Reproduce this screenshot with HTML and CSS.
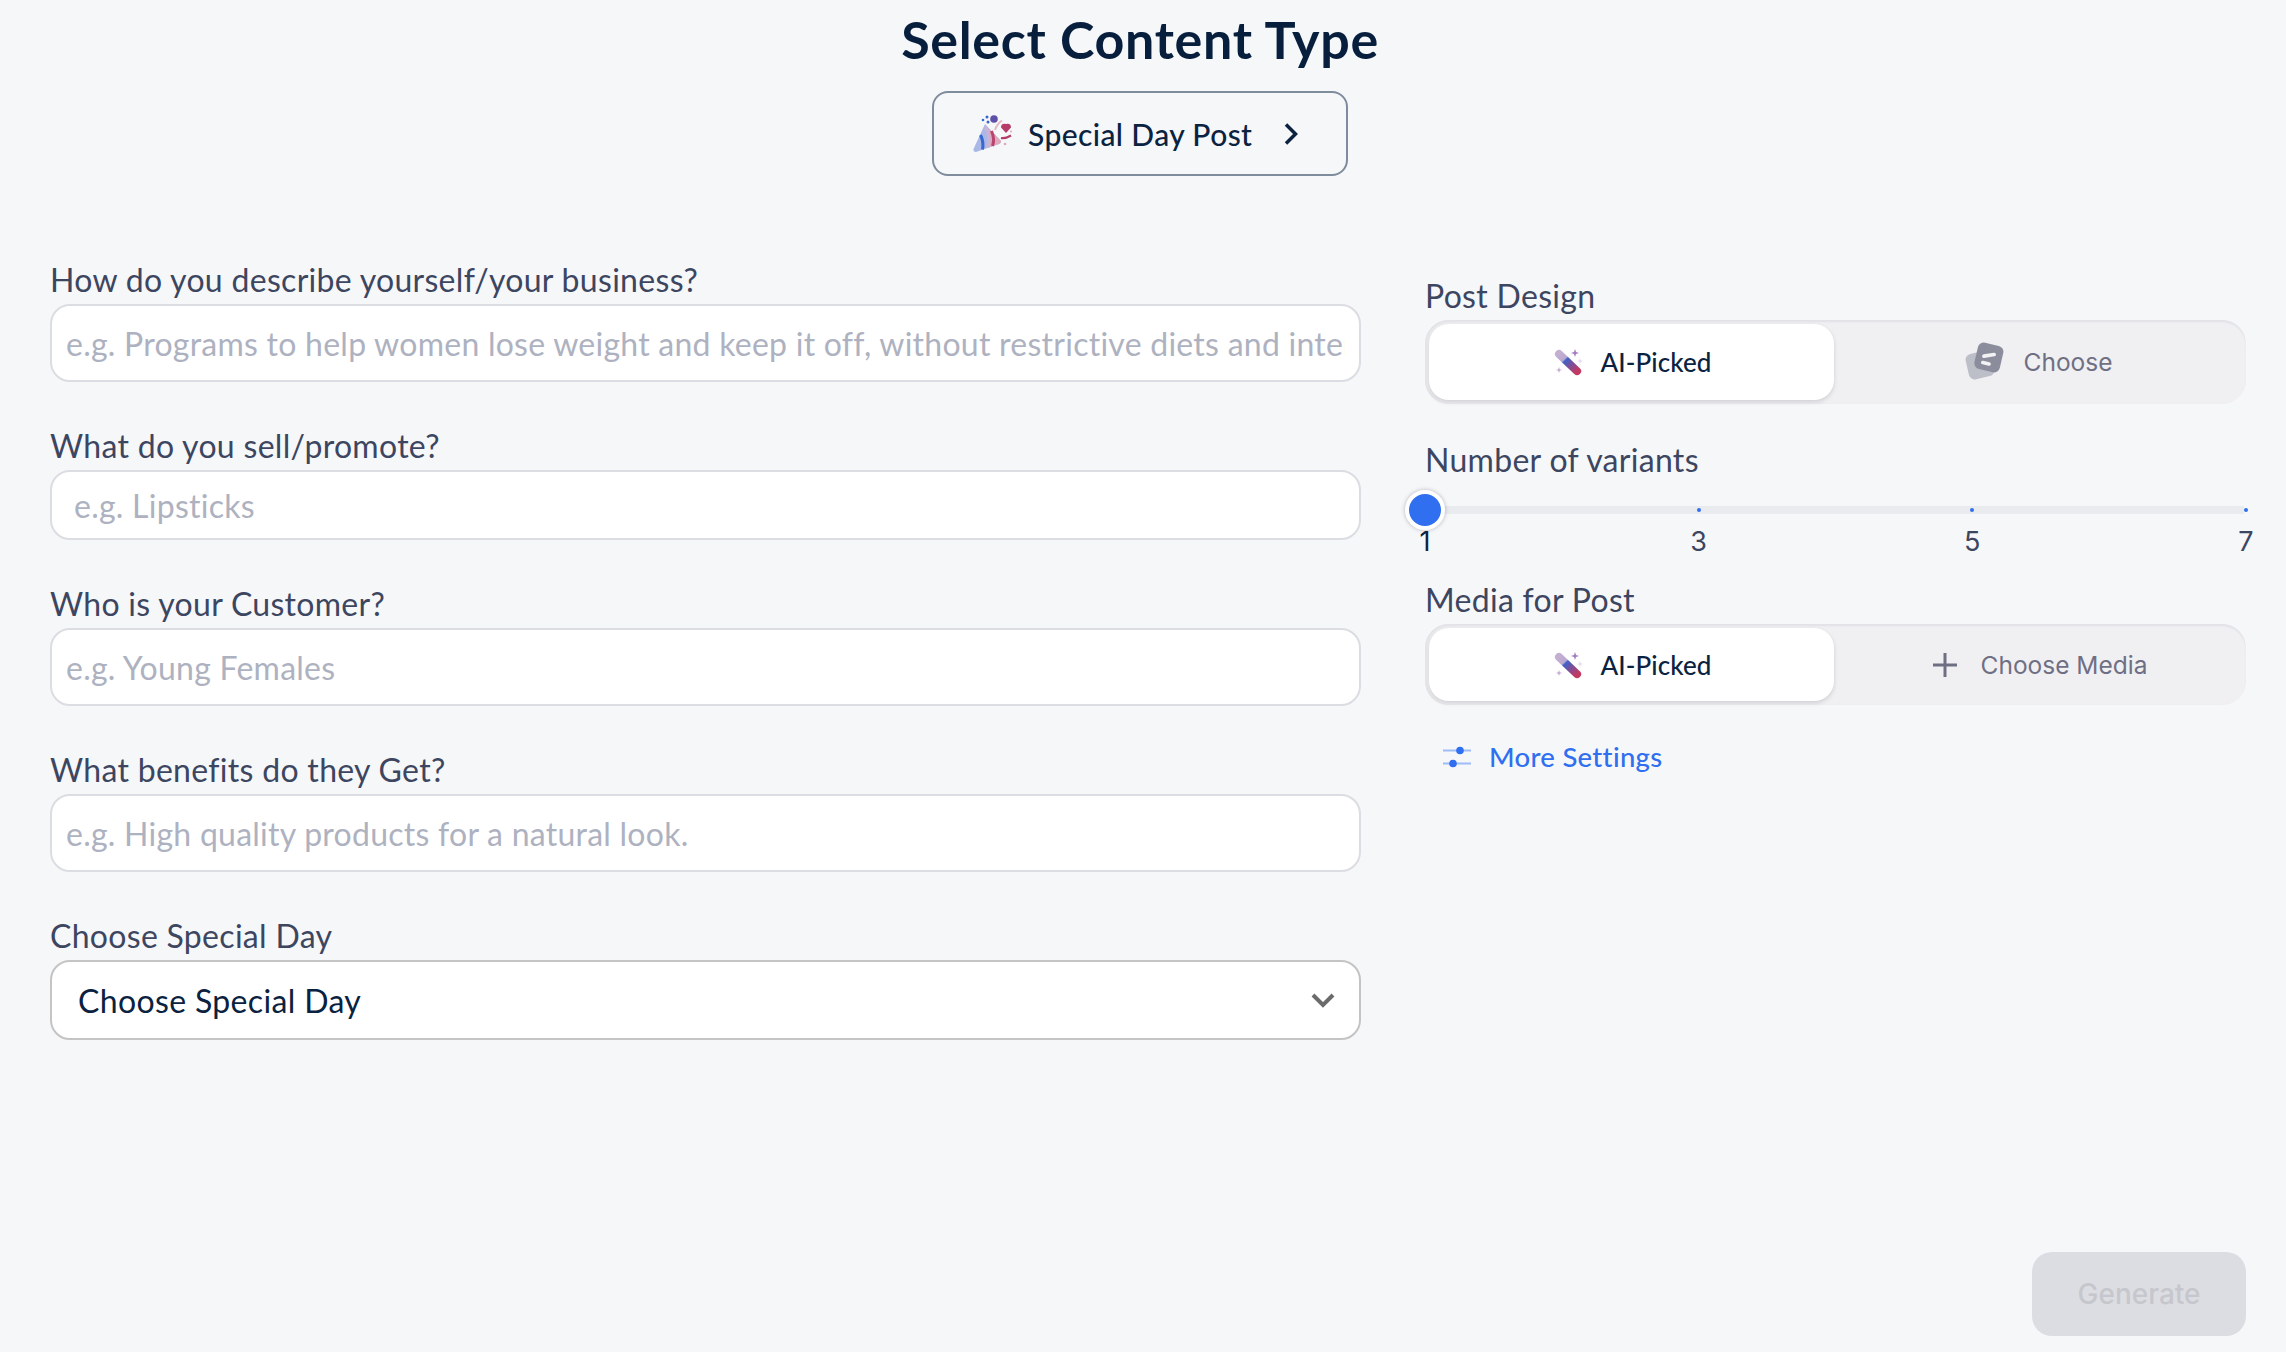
FILE: index.html
```html
<!DOCTYPE html>
<html lang="en">
<head>
<meta charset="utf-8">
<title>Select Content Type</title>
<link rel="stylesheet" href="styles.css">
</head>
<body>
<div class="page">
  <header class="head">
    <h1 class="title">Select Content Type</h1>
    <button class="type-btn" type="button">
      <svg class="party" viewBox="0 0 40 40" width="40" height="40" aria-hidden="true">
        <path d="M12 10 L28 27 Q28.500 29 26 30 L3 38 Q0 38 .5 35 Z" fill="#a9b8e6"/>
        <path d="M7.500 21 Q11 28 9.500 35.500" fill="none" stroke="#3767d2" stroke-width="3"/>
        <path d="M12 11 Q19 20 16 33 L26 30 Q28.500 29 28 27 Z" fill="#dfa9bb"/>
        <path d="M12.500 13 Q18 22 14.500 33.500" fill="none" stroke="#c9b3d6" stroke-width="3.400"/>
        <path d="M18.500 17 Q22 25 19.500 32" fill="none" stroke="#b8446f" stroke-width="3"/>
        <circle cx="21" cy="5" r="3.800" fill="#5e4fa8"/>
        <circle cx="10" cy="6" r="1.300" fill="#3767d2"/>
        <circle cx="14" cy="3" r="1.500" fill="#3767d2"/>
        <circle cx="15" cy="8" r="1.500" fill="#3767d2"/>
        <path d="M33 19 L28 13.500 Q28 9 33 10 Q38 9 38 13.500 Z" fill="#b53c68"/>
        <path d="M22 16 Q24 10 29 6.500" fill="none" stroke="#e6b8c6" stroke-width="2"/>
        <path d="M28 24 Q32 25 38 21.500" fill="none" stroke="#b53c68" stroke-width="2.200"/>
        <circle cx="32" cy="30" r="1.300" fill="#dfa9bb"/>
        <circle cx="38" cy="17.500" r="1" fill="#dfa9bb"/>
      </svg>
      <span class="type-text">Special Day Post</span>
      <svg class="chev" viewBox="0 0 14 22" width="14" height="22" aria-hidden="true"><path d="M2 1.500 L11.500 11 L2 20.500" fill="none" stroke="#0b2340" stroke-width="3.500"/></svg>
    </button>
  </header>

  <main class="columns">
    <section class="col-left">
      <div class="field">
        <label class="label">How do you describe yourself/your business?</label>
        <input class="input tall" type="text" placeholder="e.g. Programs to help women lose weight and keep it off, without restrictive diets and intermittent fasting">
      </div>
      <div class="field">
        <label class="label">What do you sell/promote?</label>
        <input class="input short" type="text" placeholder="e.g. Lipsticks">
      </div>
      <div class="field">
        <label class="label">Who is your Customer?</label>
        <input class="input tall" type="text" placeholder="e.g. Young Females">
      </div>
      <div class="field">
        <label class="label">What benefits do they Get?</label>
        <input class="input tall" type="text" placeholder="e.g. High quality products for a natural look.">
      </div>
      <div class="field">
        <label class="label">Choose Special Day</label>
        <div class="select-wrap">
          <select class="select"><option>Choose Special Day</option></select>
          <svg class="select-arrow" viewBox="0 0 24 16" width="24" height="16" aria-hidden="true"><path d="M2 3 L12 13 L22 3" fill="none" stroke="#6b6b6b" stroke-width="4"/></svg>
        </div>
      </div>
    </section>

    <aside class="col-right">
      <div class="group">
        <div class="label">Post Design</div>
        <div class="segment seg-post">
          <div class="seg-item active">
            <svg class="wand" viewBox="0 0 32 32" width="32" height="32" aria-hidden="true">
              <defs><linearGradient id="wg" x1="0" y1="0" x2="1" y2="1"><stop offset="0" stop-color="#c3afd0"/><stop offset=".3" stop-color="#bba8d0"/><stop offset=".36" stop-color="#3f62c8"/><stop offset="1" stop-color="#c23a62"/></linearGradient></defs>
              <path d="M6 8 L24 25 L24.100 25.100" stroke="url(#wg)" stroke-width="8" stroke-linecap="round" fill="none"/>
              <path d="M22 3 L23 6 L26 7 L23 8 L22 11 L21 8 L18 7 L21 6 Z" fill="#a17cc0"/>
              <path d="M27 12 L27.800 14.200 L30 15 L27.800 15.800 L27 18 L26.200 15.800 L24 15 L26.200 14.200 Z" fill="#e4dcee"/>
              <path d="M6 21 L6.800 23.200 L9 24 L6.800 24.800 L6 27 L5.200 24.800 L3 24 L5.200 23.200 Z" fill="#c7a9d6"/>
            </svg>
            <span class="seg-text">AI-Picked</span>
          </div>
          <div class="seg-item gap-wide">
            <svg class="stack" viewBox="0 0 40 42" width="40" height="42" aria-hidden="true">
              <rect x="3" y="11" width="26" height="26" rx="6" transform="rotate(-13 16 24)" fill="#bcbec8"/>
              <rect x="12" y="3" width="26" height="27" rx="6" transform="rotate(13 25 16)" fill="#8b8d9c"/>
              <rect x="18" y="12.500" width="14" height="3.600" rx="1.800" transform="rotate(-9 25 14)" fill="#f2f2f5"/>
              <rect x="17" y="20.500" width="10" height="3.600" rx="1.800" transform="rotate(13 22 22)" fill="#f2f2f5"/>
            </svg>
            <span class="seg-text muted">Choose</span>
          </div>
        </div>
      </div>

      <div class="group group-slider">
        <div class="label">Number of variants</div>
        <div class="slider">
          <div class="track"></div>
          <div class="stop"><span class="thumb"></span><span class="num first">1</span></div>
          <div class="stop"><span class="dot"></span><span class="num">3</span></div>
          <div class="stop"><span class="dot"></span><span class="num">5</span></div>
          <div class="stop"><span class="dot"></span><span class="num">7</span></div>
        </div>
      </div>

      <div class="group group-media">
        <div class="label">Media for Post</div>
        <div class="segment seg-media">
          <div class="seg-item active">
            <svg class="wand" viewBox="0 0 32 32" width="32" height="32" aria-hidden="true">
              <path d="M6 8 L24 25 L24.100 25.100" stroke="url(#wg)" stroke-width="8" stroke-linecap="round" fill="none"/>
              <path d="M22 3 L23 6 L26 7 L23 8 L22 11 L21 8 L18 7 L21 6 Z" fill="#a17cc0"/>
              <path d="M27 12 L27.800 14.200 L30 15 L27.800 15.800 L27 18 L26.200 15.800 L24 15 L26.200 14.200 Z" fill="#e4dcee"/>
              <path d="M6 21 L6.800 23.200 L9 24 L6.800 24.800 L6 27 L5.200 24.800 L3 24 L5.200 23.200 Z" fill="#c7a9d6"/>
            </svg>
            <span class="seg-text">AI-Picked</span>
          </div>
          <div class="seg-item gap-plus">
            <svg class="plus" viewBox="0 0 24 24" width="24" height="24" aria-hidden="true"><path d="M12 0 V24 M0 12 H24" stroke="#6f6f84" stroke-width="3"/></svg>
            <span class="seg-text muted">Choose Media</span>
          </div>
        </div>
      </div>

      <a class="more" href="#">
        <svg class="sliders" viewBox="0 0 30 24" width="30" height="24" aria-hidden="true">
          <path d="M1 5.500 H29 M1 18.500 H29" stroke="#9dbcf8" stroke-width="1.800"/>
          <circle cx="18" cy="5.500" r="3.800" fill="#2f6ff0"/>
          <circle cx="11" cy="18.500" r="3.800" fill="#2f6ff0"/>
        </svg>
        <span>More Settings</span>
      </a>
    </aside>
  </main>

  <footer class="foot">
    <button class="generate" type="button" disabled>Generate</button>
  </footer>
</div>
</body>
</html>
```

FILE: styles.css
```css
* { box-sizing: border-box; }
html, body { margin: 0; height: 100%; }
body {
  background: #f6f7f9;
  font-family: "Lato", "Noto Sans", sans-serif;
  color: #3d4660;
}
.page {
  height: 100vh;
  display: flex;
  flex-direction: column;
  padding: 0 40px 16px 50px;
  overflow: hidden;
}
.head {
  display: flex;
  flex-direction: column;
  align-items: center;
  padding-right: 16px;
}
.title {
  margin: 7px 0 0;
  font-size: 52px;
  line-height: 64px;
  font-weight: 700;
  color: #071f3d;
  letter-spacing: .7px;
}
.type-btn {
  margin-top: 20px;
  width: 416px;
  height: 85px;
  border: 2px solid #7f8c9e;
  border-radius: 16px;
  background: transparent;
  display: flex;
  align-items: center;
  padding: 0 0 0 39px;
  font-family: inherit;
}
.party { flex: none; }
.type-text {
  margin-left: 15px;
  font-size: 30px;
  font-weight: 500;
  color: #0b2340;
  letter-spacing: .4px;
}
.chev { margin-left: 32px; flex: none; }

.columns {
  flex: 1;
  display: flex;
  gap: 64px;
  padding-top: 84px;
  min-height: 0;
}
.col-left {
  width: 1311px;
  display: flex;
  flex-direction: column;
  gap: 44px;
}
.col-right {
  width: 821px;
  padding-top: 16px;
  display: flex;
  flex-direction: column;
}
.field { display: flex; flex-direction: column; }
.label {
  display: block;
  height: 40px;
  line-height: 40px;
  margin-bottom: 4px;
  font-size: 32px;
  color: #3d4660;
  letter-spacing: .3px;
  white-space: nowrap;
}
.input {
  width: 100%;
  border: 2px solid #dcdde3;
  border-radius: 20px;
  background: #fff;
  font-family: inherit;
  font-size: 32px;
  letter-spacing: .25px;
  color: #0b2340;
  outline: none;
}
.input::placeholder { color: #aeb2c0; opacity: 1; }
.tall { height: 78px; padding: 0 14px; }
.short { height: 70px; padding: 0 22px; }
.select-wrap { position: relative; }
.select {
  width: 100%;
  height: 80px;
  appearance: none;
  border: 2px solid #c4c4c4;
  border-radius: 20px;
  background: #fff;
  padding: 0 0 0 26px;
  font-family: inherit;
  font-size: 32px;
  letter-spacing: .35px;
  color: #0a2240;
  outline: none;
}
.select-arrow {
  position: absolute;
  right: 26px;
  top: 32px;
  pointer-events: none;
}
.segment {
  display: flex;
  background: #f0f0f3;
  border-radius: 24px;
  padding: 4px;
  box-shadow: inset 0 2px 2px #e2e2e6, inset 2px 0 2px #e6e6ea;
}
.seg-post { height: 84px; }
.seg-media { height: 81px; }
.seg-item {
  flex: 1;
  display: flex;
  align-items: center;
  justify-content: center;
  gap: 15px;
  border-radius: 20px;
}
.gap-wide { gap: 20px; }
.gap-plus { gap: 24px; padding-left: 4px; }
.seg-item.active {
  flex: none;
  width: 405px;
  padding-left: 2px;
  background: #fff;
  box-shadow: 0 2px 4px rgba(60, 60, 80, .18);
}
.seg-text {
  font-size: 26px;
  font-weight: 500;
  color: #0b2340;
  letter-spacing: .1px;
}
.seg-text.muted {
  color: #6f6f84;
  font-weight: 400;
  font-family: "Inter", sans-serif;
  font-size: 24.500px;
  letter-spacing: 0;
}
.group-slider { margin-top: 36px; }
.slider {
  position: relative;
  display: flex;
  justify-content: space-between;
  height: 62px;
}
.track {
  position: absolute;
  left: 0;
  right: 2px;
  top: 22px;
  height: 8px;
  background: #e9ebef;
}
.stop {
  position: relative;
  width: 0;
  display: flex;
  flex-direction: column;
  align-items: center;
}
.thumb {
  flex: none;
  width: 40px;
  height: 40px;
  margin-top: 6px;
  border-radius: 50%;
  background: #2f6ff0;
  border: 4px solid #fff;
  box-shadow: 0 0 4px rgba(60, 60, 80, .35);
  position: relative;
  z-index: 1;
}
.dot {
  flex: none;
  width: 4px;
  height: 4px;
  margin-top: 24px;
  border-radius: 50%;
  background: #2f6ff0;
}
.num {
  font-family: "Inter", sans-serif;
  font-size: 27px;
  line-height: 34px;
  color: #3d4660;
  margin-top: 13px;
}
.num.first { color: #0b2340; margin-top: -5px; }
.group-media { margin-top: 34px; }
.more {
  margin-top: 35px;
  margin-left: 17px;
  display: flex;
  align-items: center;
  gap: 17px;
  color: #2f6ff0;
  font-size: 27.500px;
  font-weight: 500;
  letter-spacing: .3px;
  text-decoration: none;
}
.foot { display: flex; justify-content: flex-end; }
.generate {
  width: 214px;
  height: 84px;
  border: none;
  border-radius: 20px;
  background: #dcdde2;
  color: #c6c7cc;
  font-family: "Inter", sans-serif;
  font-size: 28px;
  font-weight: 500;
}
```
